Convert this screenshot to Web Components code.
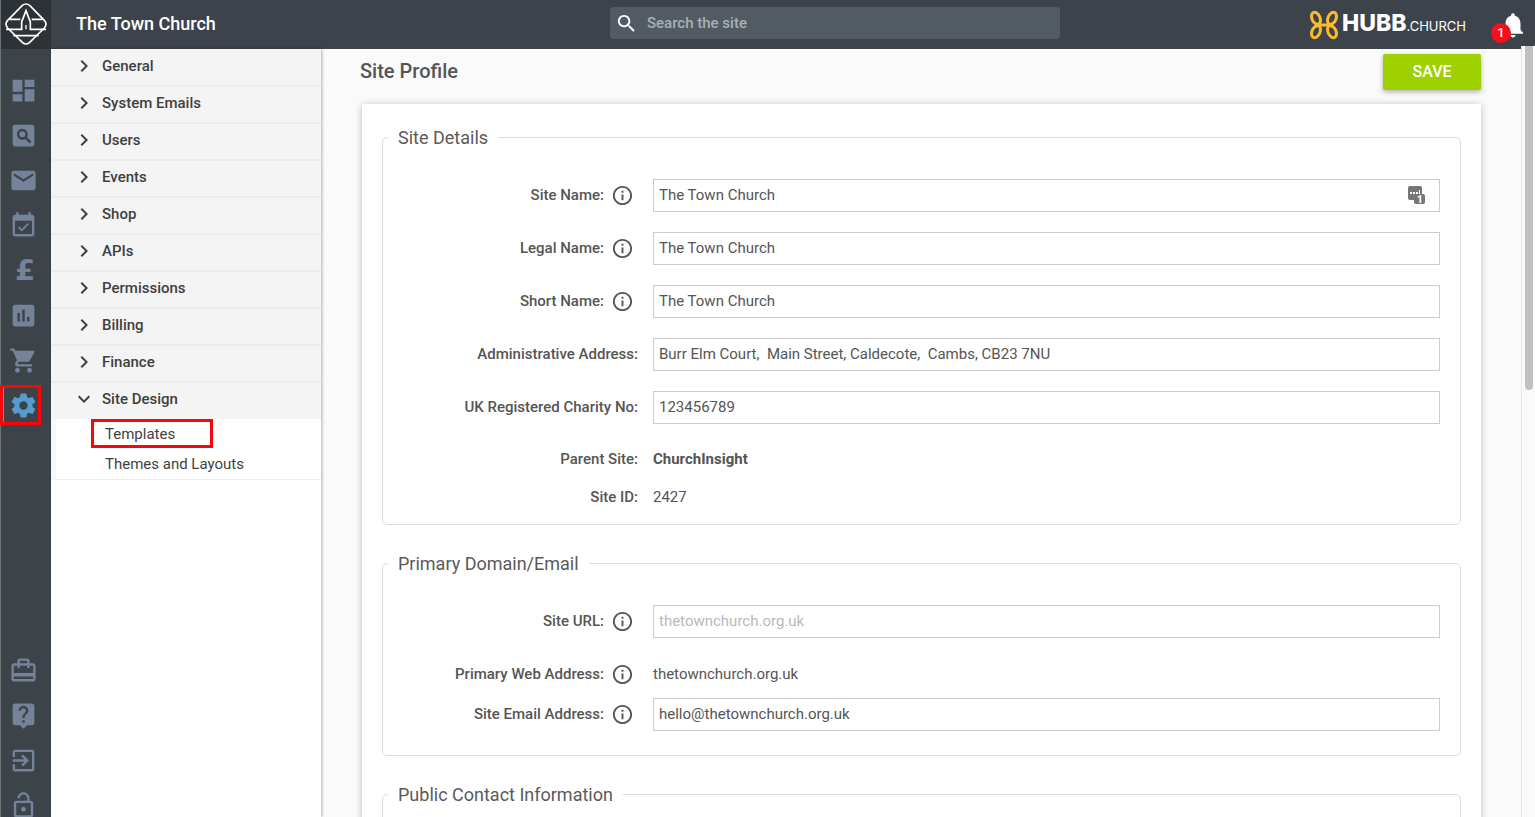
<!DOCTYPE html>
<html lang="en">
<head>
<meta charset="utf-8">
<title>Site Profile - The Town Church</title>
<style>
  html, body { height: 100%; margin: 0; }
  body { font-family: Roboto, "Liberation Sans", sans-serif; font-size: 15px; color: #555; overflow: hidden; background: #fafafa; }
</style>
</head>
<body>
<admin-app>
  <app-header slot="header" site="The Town Church"></app-header>
  <icon-rail slot="rail"></icon-rail>
  <side-menu slot="menu">
    <menu-section label="General"></menu-section>
    <menu-section label="System Emails"></menu-section>
    <menu-section label="Users"></menu-section>
    <menu-section label="Events"></menu-section>
    <menu-section label="Shop"></menu-section>
    <menu-section label="APIs"></menu-section>
    <menu-section label="Permissions"></menu-section>
    <menu-section label="Billing"></menu-section>
    <menu-section label="Finance"></menu-section>
    <menu-section label="Site Design" open>
      <menu-link marked>Templates</menu-link>
      <menu-link>Themes and Layouts</menu-link>
    </menu-section>
  </side-menu>
  <profile-page heading="Site Profile">
    <form-section legend="Site Details">
      <text-field label="Site Name:" help value="The Town Church" manager></text-field>
      <text-field label="Legal Name:" help value="The Town Church"></text-field>
      <text-field label="Short Name:" help value="The Town Church"></text-field>
      <text-field label="Administrative Address:" value="Burr Elm Court,  Main Street, Caldecote,  Cambs, CB23 7NU"></text-field>
      <text-field label="UK Registered Charity No:" value="123456789"></text-field>
      <static-field label="Parent Site:"><b>ChurchInsight</b></static-field>
      <static-field label="Site ID:">2427</static-field>
    </form-section>
    <form-section legend="Primary Domain/Email">
      <text-field label="Site URL:" help placeholder="thetownchurch.org.uk"></text-field>
      <static-field label="Primary Web Address:" help>thetownchurch.org.uk</static-field>
      <text-field label="Site Email Address:" help value="hello@thetownchurch.org.uk"></text-field>
    </form-section>
    <form-section legend="Public Contact Information"></form-section>
  </profile-page>
</admin-app>

<script>
const ICONS = {
  dashboard: '<path d="M3 13h8V3H3v10zm0 8h8v-6H3v6zm10 0h8V11h-8v10zm0-18v6h8V3h-8z"/>',
  find: '<path fill-rule="evenodd" d="M5 3h14a2 2 0 0 1 2 2v14a2 2 0 0 1-2 2H5a2 2 0 0 1-2-2V5a2 2 0 0 1 2-2zm6 3.500a4.500 4.500 0 1 0 2.400 8.300l3.800 3.800 1.400-1.400-3.800-3.800A4.500 4.500 0 0 0 11 6.500zm0 2a2.500 2.500 0 1 1 0 5 2.500 2.500 0 0 1 0-5z"/>',
  mail: '<path d="M20 4H4c-1.100 0-1.990.9-1.990 2L2 18c0 1.100.9 2 2 2h16c1.100 0 2-.9 2-2V6c0-1.100-.9-2-2-2zm0 4l-8 5-8-5V6l8 5 8-5v2z"/>',
  calendar: '<path d="M16.530 11.060L15.470 10l-4.880 4.880-2.120-2.120-1.060 1.060L10.590 17l5.940-5.940zM19 3h-1V1h-2v2H8V1H6v2H5c-1.110 0-1.990.9-1.990 2L3 19c0 1.100.89 2 2 2h14c1.100 0 2-.9 2-2V5c0-1.100-.9-2-2-2zm0 16H5V8h14v11z"/>',
  chart: '<path d="M19 3H5c-1.100 0-2 .9-2 2v14c0 1.100.9 2 2 2h14c1.100 0 2-.9 2-2V5c0-1.100-.9-2-2-2zM9 17H7v-7h2v7zm4 0h-2V7h2v10zm4 0h-2v-4h2v4z"/>',
  cart: '<path d="M7 18c-1.100 0-1.990.9-1.990 2S5.900 22 7 22s2-.9 2-2-.9-2-2-2zM1 2v2h2l3.600 7.590-1.350 2.450c-.16.28-.25.61-.25.96 0 1.100.9 2 2 2h12v-2H7.420c-.14 0-.25-.11-.25-.25l.03-.12.9-1.630h7.450c.75 0 1.410-.41 1.750-1.030l3.580-6.490c.08-.14.12-.31.12-.48 0-.55-.45-1-1-1H5.210l-.94-2H1zm16 16c-1.100 0-1.990.9-1.990 2s.89 2 1.990 2 2-.9 2-2-.9-2-2-2z"/>',
  gear: '<path d="M19.430 12.980c.04-.32.07-.64.07-.98s-.03-.66-.07-.98l2.110-1.650c.19-.15.24-.42.12-.64l-2-3.460c-.12-.22-.39-.3-.61-.22l-2.490 1c-.52-.4-1.080-.73-1.690-.98l-.38-2.650C14.460 2.180 14.250 2 14 2h-4c-.25 0-.46.18-.49.42l-.38 2.650c-.61.25-1.170.59-1.690.98l-2.490-1c-.23-.09-.49 0-.61.22l-2 3.460c-.13.22-.07.49.12.64l2.110 1.650c-.04.32-.07.65-.07.98s.03.66.07.98l-2.110 1.650c-.19.15-.24.42-.12.64l2 3.460c.12.22.39.3.61.22l2.490-1c.52.4 1.080.73 1.690.98l.38 2.650c.03.24.24.42.49.42h4c.25 0 .46-.18.49-.42l.38-2.650c.61-.25 1.170-.59 1.690-.98l2.490 1c.23.09.49 0 .61-.22l2-3.460c.12-.22.07-.49-.12-.64l-2.110-1.650zM12 15.500c-1.930 0-3.500-1.570-3.500-3.500s1.570-3.500 3.500-3.500 3.500 1.570 3.500 3.500-1.570 3.500-3.500 3.500z"/>',
  travel: '<path d="M20 6h-3V4c0-1.110-.89-2-2-2H9c-1.110 0-2 .89-2 2v2H4c-1.110 0-2 .89-2 2v11c0 1.110.89 2 2 2h16c1.110 0 2-.89 2-2V8c0-1.110-.89-2-2-2zM9 4h6v2H9V4zm11 15H4v-2h16v2zm0-5H4V8h3v2h2V8h6v2h2V8h3v6z"/>',
  help: '<path d="M19 2H5c-1.110 0-2 .9-2 2v14c0 1.100.89 2 2 2h4l3 3 3-3h4c1.100 0 2-.9 2-2V4c0-1.100-.9-2-2-2zm-6 16h-2v-2h2v2zm2.070-7.750l-.9.92C13.450 11.900 13 12.500 13 14h-2v-.5c0-1.100.45-2.100 1.170-2.830l1.240-1.260c.37-.36.59-.86.59-1.410 0-1.100-.9-2-2-2s-2 .9-2 2H8c0-2.210 1.790-4 4-4s4 1.790 4 4c0 .88-.36 1.680-.93 2.250z"/>',
  exit: '<path d="M10.090 15.590L11.500 17l5-5-5-5-1.410 1.410L12.670 11H3v2h9.670l-2.580 2.590zM19 3H5c-1.110 0-2 .9-2 2v4h2V5h14v14H5v-4H3v4c0 1.100.89 2 2 2h14c1.100 0 2-.9 2-2V5c0-1.100-.9-2-2-2z"/>',
  unlock: '<path d="M12 17c1.100 0 2-.9 2-2s-.9-2-2-2-2 .9-2 2 .9 2 2 2zm6-9h-1V6c0-2.760-2.240-5-5-5S7 3.240 7 6h1.900c0-1.710 1.390-3.100 3.100-3.100 1.710 0 3.100 1.390 3.100 3.100v2H6c-1.100 0-2 .9-2 2v10c0 1.100.9 2 2 2h12c1.100 0 2-.9 2-2V10c0-1.100-.9-2-2-2zm0 12H6V10h12v10z"/>',
  info: '<path d="M11 17h2v-6h-2v6zm1-15C6.480 2 2 6.480 2 12s4.480 10 10 10 10-4.480 10-10S17.520 2 12 2zm0 18c-4.410 0-8-3.590-8-8s3.590-8 8-8 8 3.590 8 8-3.590 8-8 8zM11 9h2V7h-2v2z"/>',
  bell: '<path d="M12 22c1.100 0 2-.9 2-2h-4c0 1.100.89 2 2 2zm6-6v-5c0-3.070-1.640-5.640-4.500-6.320V4c0-.83-.67-1.500-1.500-1.500s-1.500.67-1.500 1.500v.68C7.630 5.360 6 7.920 6 11v5l-2 2v1h16v-1l-2-2z"/>',
  search: '<path d="M15.500 14h-.79l-.28-.27C15.410 12.590 16 11.110 16 9.500 16 5.910 13.090 3 9.500 3S3 5.910 3 9.500 5.910 16 9.500 16c1.610 0 3.090-.59 4.230-1.570l.27.28v.79l5 4.990L20.490 19l-4.990-5zm-6 0C7.010 14 5 11.990 5 9.500S7.010 5 9.500 5 14 7.010 14 9.500 11.990 14 9.500 14z"/>',
  chevron: '<path d="M10 6L8.590 7.410 13.170 12l-4.580 4.590L10 18l6-6z"/>',
  down: '<path d="M16.590 8.590L12 13.170 7.410 8.590 6 10l6 6 6-6z"/>'
};
const icon = (name, size) => `<svg class="icon" width="${size}" height="${size}" viewBox="0 0 24 24" fill="currentColor" aria-hidden="true">${ICONS[name]}</svg>`;

class Base extends HTMLElement {
  constructor() { super(); this.attachShadow({ mode: 'open' }); }
  connectedCallback() {
    this.shadowRoot.innerHTML = `<style>:host,*,*::before,*::after{box-sizing:border-box}.icon{display:block;flex:none}${this.css()}</style>${this.html()}`;
  }
  attr(n) { return this.getAttribute(n) || ''; }
}

customElements.define('admin-app', class extends Base {
  css() { return `
    :host { display: flex; flex-direction: column; height: 100vh; }
    .body { display: flex; flex: 1; min-height: 0; }
    main { flex: 1; min-width: 0; }`; }
  html() { return `<slot name="header"></slot><div class="body"><slot name="rail"></slot><slot name="menu"></slot><main><slot></slot></main></div>`; }
});

customElements.define('app-header', class extends Base {
  css() { return `
    :host { display: block; flex: none; background: #3c434a; color: #fff; }
    header { display: grid; grid-template-columns: 51px minmax(0, 559fr) minmax(0, 450fr) minmax(0, 475fr); align-items: center; height: 49px; }
    .site { display: block; height: 49px; background: #2c3236; border-left: 1px solid #6c7377; }
    .site svg { display: block; }
    h1 { margin: 0; padding: 0 0 2px 25px; font-size: 18px; font-weight: 500; line-height: 24px; }
    .search { display: flex; align-items: center; height: 32px; padding-left: 5px; gap: 9px; background: #525b64; border-radius: 3px; margin-bottom: 3px; }
    .search input { flex: 1; min-width: 0; border: 0; padding: 0; background: none; outline: 0; color: #fff; font: 500 15px/20px Roboto, sans-serif; }
    .search input::placeholder { color: #a9afb4; opacity: 1; }
    .right { display: flex; justify-content: flex-end; align-items: center; padding-right: 7px; gap: 32px; }
    .hubb { display: flex; align-items: center; gap: 3px; color: #fff; text-decoration: none; font-family: Inter, sans-serif; }
    .hubb span { font-size: 13px; line-height: 28px; }
    .hubb b { font-size: 23px; font-weight: 800; }
    .bell { position: relative; border: 0; padding: 0; background: none; color: #fff; }
    .badge { position: absolute; left: -7px; bottom: -3px; width: 20px; height: 20px; border-radius: 50%; background: #fb0d1b; font: 500 13px/20px Roboto, sans-serif; text-align: center; }`; }
  html() { return `<header>
    <a class="site" href="#" aria-label="Home"><svg width="50" height="49" viewBox="3 0 150 147" fill="none" stroke="#fff" stroke-width="5">
      <path d="M67 16q11-8 22 0l44 45q10 11 0 23l-44 43q-11 10-22 0L23 84q-10-12 0-23z"/>
      <path d="M28 58H61M95 58H128M18 88H65V66L78 32L91 66V88H138M40 107H116"/>
      <path d="M78 75V88" stroke-width="4"/></svg></a>
    <h1>${this.attr('site')}</h1>
    <label class="search">${icon('search', 23)}<input type="search" placeholder="Search the site" aria-label="Search the site"></label>
    <div class="right">
      <a class="hubb" href="#"><svg width="30" height="30" viewBox="19 27 90 90" fill="none" stroke="#fcba2d" stroke-width="9">
        <ellipse cx="40" cy="52" rx="12" ry="19" transform="rotate(-25 40 52)"/>
        <ellipse cx="88" cy="52" rx="12" ry="19" transform="rotate(25 88 52)"/>
        <ellipse cx="40" cy="92" rx="12" ry="19" transform="rotate(25 40 92)"/>
        <ellipse cx="88" cy="92" rx="12" ry="19" transform="rotate(-25 88 92)"/>
        <path d="M40 72H88"/></svg>
        <span><b>HUBB</b>.CHURCH</span></a>
      <button class="bell" aria-label="Notifications">${icon('bell', 30)}<span class="badge">1</span></button>
    </div></header>`; }
});

customElements.define('icon-rail', class extends Base {
  css() { return `
    :host { display: flex; flex-direction: column; flex: none; width: 51px; padding-top: 19px; overflow: hidden; background: #3c444a; box-shadow: inset 1px 0 #6c7377; }
    nav { display: flex; flex-direction: column; flex: none; }
    nav + nav { margin-top: auto; margin-bottom: -11px; }
    a { position: relative; display: flex; align-items: center; height: 45px; padding: 0 0 1px 9px; color: #75839a; text-decoration: none; }
    .pound { width: 32px; text-align: center; font: bold 29px/29px "DejaVu Sans", sans-serif; }
    .active { color: #569dcf; }
    .active::before { content: ""; position: absolute; left: 2px; top: 5px; width: 2px; height: 35px; background: #569dcf; }
    .active::after { content: ""; position: absolute; left: 0; top: 2px; width: 41px; height: 40px; border: 3px solid #f8060b; }`; }
  link(n, t) { return `<a href="#" aria-label="${t}"${n === 'gear' ? ' class="active"' : ''}>${n === 'pound' ? '<span class="pound">£</span>' : icon(n, 29)}</a>`; }
  html() {
    const top = [['dashboard','Dashboard'],['find','Find'],['mail','Mail'],['calendar','Events'],['pound','Giving'],['chart','Reports'],['cart','Shop'],['gear','Settings']];
    const low = [['travel','Resources'],['help','Help'],['exit','Go to site'],['unlock','Log out']];
    return `<nav>${top.map(i => this.link(...i)).join('')}</nav><nav>${low.map(i => this.link(...i)).join('')}</nav>`;
  }
});

customElements.define('side-menu', class extends Base {
  css() { return `
    :host { display: block; flex: none; width: 270px; background: #fff; box-shadow: 1px 0 3px rgba(0,0,0,.3); z-index: 1; }
    nav { border-top: 1px solid #f4f4f4; }`; }
  html() { return `<nav><slot></slot></nav>`; }
});

customElements.define('menu-section', class extends Base {
  css() { return `
    :host { display: block; }
    button { display: flex; align-items: center; gap: 6px; width: 100%; height: 37px; padding: 0 0 3px 21px; border: 0; border-bottom: 2px solid #ececec; background: #f4f4f4; color: #3f3f3f; font: 500 15px/20px Roboto, sans-serif; text-align: left; }
    :host([open]) button { height: 36px; border-bottom-color: #f4f4f4; }
    .items { border-left: 5px solid #f8f8f8; border-bottom: 1px solid #ececec; }`; }
  html() { const o = this.hasAttribute('open');
    return `<button aria-expanded="${o}">${icon(o ? 'down' : 'chevron', 24)}<span>${this.attr('label')}</span></button>${o ? '<div class="items"><slot></slot></div>' : ''}`; }
});

customElements.define('menu-link', class extends Base {
  css() { return `
    :host { display: block; position: relative; }
    a { display: block; padding-left: 49px; color: #3f3f3f; font-size: 15px; line-height: 30px; text-decoration: none; }
    :host([marked])::after { content: ""; position: absolute; left: 35px; top: 0; width: 122px; height: 29px; border: 3px solid #f8060b; box-sizing: border-box; }`; }
  html() { return `<a href="#"><slot></slot></a>`; }
});

customElements.define('profile-page', class extends Base {
  css() { return `
    :host { display: block; position: relative; height: 100%; }
    .content { height: 100%; overflow: hidden; padding: 5px 54px 0 39px; }
    .bar { display: flex; justify-content: space-between; align-items: center; margin-bottom: 14px; }
    h2 { margin: 0; padding-bottom: 2px; font-size: 20px; font-weight: 500; line-height: 24px; color: #555; }
    button { width: 98px; height: 36px; border: 0; border-radius: 2px; background: #9fd000; color: #fff; font: 500 16px/20px Roboto, sans-serif; box-shadow: 0 2px 5px rgba(0,0,0,.3); }
    form { margin-left: 2px; padding: 22px 20px; background: #fff; box-shadow: 0 1px 7px rgba(0,0,0,.25); }
    .track { position: absolute; right: 0; top: -3px; bottom: 0; width: 14px; padding-left: 3px; background: #fafafa; border-left: 1px solid #e6e6e6; }
    .thumb { width: 8px; height: 344px; border-radius: 0 0 4px 4px; background: #c1c1c1; }`; }
  html() { return `<div class="content"><div class="bar"><h2>${this.attr('heading')}</h2><button type="button">SAVE</button></div>
    <form><slot></slot></form></div><div class="track"><div class="thumb"></div></div>`; }
});

customElements.define('form-section', class extends Base {
  css() { return `
    :host { display: block; margin-bottom: 27px; }
    fieldset { margin: 0; min-width: 0; padding: 31px 20px 4px 5px; border: 1px solid #dcdcdc; border-radius: 5px; }
    legend { padding: 2px 10px 0; font-size: 18px; line-height: 20px; color: #5a5a5a; }`; }
  html() { return `<fieldset><legend>${this.attr('legend')}</legend><slot></slot></fieldset>`; }
});

const rowCss = `
  .row { display: grid; grid-template-columns: 250px minmax(0, 1fr); column-gap: 15px; align-items: center; }
  .name { display: flex; justify-content: flex-end; align-items: center; gap: 7px; font-size: 15px; line-height: 20px; }
  .name label, .name span { font-weight: 500; white-space: nowrap; }
  .name label { padding-bottom: 2px; }
  .name button { display: flex; align-items: center; width: 27px; height: 32px; padding: 0; border: 0; background: none; color: #555; }`;
const helpButton = '<button type="button" aria-label="More information">' + icon('info', 23) + '</button>';

customElements.define('text-field', class extends Base {
  css() { return rowCss + `
    :host { display: block; margin-bottom: 20px; }
    .box { position: relative; }
    input { display: block; width: 100%; height: 33px; padding: 0 5px 1px; border: 1px solid #ccc; border-radius: 0; background: #fff; color: #555; font: 400 15px/20px Roboto, sans-serif; outline: 0; }
    input::placeholder { color: #b9b9b9; opacity: 1; }
    .manager { position: absolute; right: 15px; top: 7px; }`; }
  html() {
    const key = `<svg class="manager" width="17" height="18" viewBox="0 0 17 18"><rect width="14" height="14" rx="2" fill="#767676"/><path d="M2 6h2v2H2zM5 6h2v2H5zM8 6h2v2H8zM11 4h1v4h-1z" fill="#fff"/><rect x="6" y="8" width="11" height="10" rx="2" fill="#767676"/><text x="9" y="17" font-family="Roboto, sans-serif" font-size="10" font-weight="900" fill="#fff">1</text></svg>`;
    return `<div class="row"><div class="name"><label for="f">${this.attr('label')}</label>${this.hasAttribute('help') ? helpButton : ''}</div>
      <div class="box"><input id="f" type="text" value="${this.attr('value')}" placeholder="${this.attr('placeholder')}">${this.hasAttribute('manager') ? key : ''}</div></div>`;
  }
});

customElements.define('static-field', class extends Base {
  css() { return rowCss + `
    :host { display: block; margin-bottom: 8px; }
    .row { min-height: 30px; }
    .value { line-height: 20px; }
    ::slotted(b) { font-weight: 700; }`; }
  html() { return `<div class="row"><div class="name"><span>${this.attr('label')}</span>${this.hasAttribute('help') ? helpButton : ''}</div><div class="value"><slot></slot></div></div>`; }
});
</script>
</body>
</html>
